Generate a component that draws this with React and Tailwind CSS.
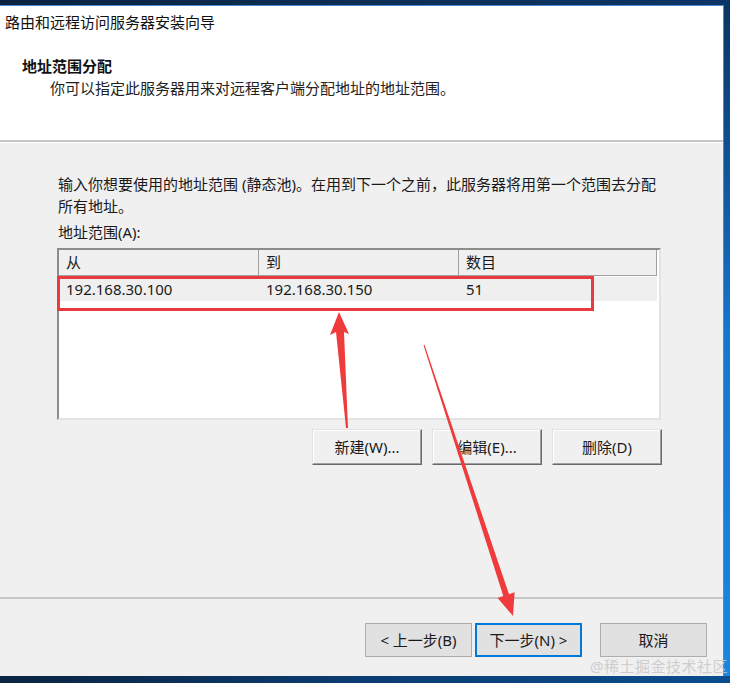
import React from "react";

const font = { fontFamily: '"Noto Sans", "Noto Sans CJK SC", sans-serif' };

const columns = [
  { key: "from", label: "从", width: "w-[200px]" },
  { key: "to", label: "到", width: "w-[200px]" },
  { key: "count", label: "数目", width: "w-[198px]" },
];

const rows = [{ from: "192.168.30.100", to: "192.168.30.150", count: "51" }];

// classic 3D push button (list actions)
const ClassicButton = ({ children }) => (
  <button className="w-[110px] h-[36px] bg-[#f0f0f0] text-[15px] text-[#1a1a1a] border border-t-[#e3e3e3] border-l-[#e3e3e3] border-r-[#696969] border-b-[#696969] shadow-[inset_-1px_-1px_0_#a0a0a0,inset_1px_1px_0_#ffffff]">
    {children}
  </button>
);

// win10 flat wizard button
const WizardButton = ({ children, primary }) => (
  <button
    className={`w-[107px] h-[34px] bg-[#e1e1e1] text-[15px] text-[#1a1a1a] ${
      primary ? "border-2 border-[#0078d7]" : "border border-[#adadad]"
    }`}
  >
    {children}
  </button>
);

const Annotations = () => (
  <svg className="absolute inset-0 pointer-events-none" width="730" height="683" viewBox="0 0 730 683">
    <rect x="58.5" y="277.5" width="534" height="32" fill="none" stroke="#ea3a3c" strokeWidth="3" />
    {/* arrow pointing up at the row */}
    <polygon points="339,312 349,334 344,332 348,428 346,428 336,332 330,335" fill="#ef3b3b" />
    {/* arrow pointing down to the next button */}
    <polygon points="423.5,345.2 424.5,344.8 509,594.2 514.6,592.3 513,616 497.6,597.9 503.3,596" fill="#ef3b3b" />
  </svg>
);

export default function App() {
  return (
    <div className="relative w-[730px] h-[683px] overflow-hidden flex flex-col bg-[#0b2a4d]" style={font}>
      {/* desktop strip above the window */}
      <div className="h-[5px] bg-gradient-to-r from-[#0a2240] via-[#0c2e55] to-[#0b3566]" />

      <div className="flex flex-1 min-h-0">
        {/* wizard window */}
        <div className="w-[724px] flex flex-col border-t border-r border-[#4a8ad0]">
          {/* header */}
          <div className="h-[136px] bg-white border-b-2 border-[#c6c6c6] flex flex-col text-[15px] leading-[18px] text-[#111]">
            <div className="pt-[7px] pl-[5px]">路由和远程访问服务器安装向导</div>
            <div className="mt-[26px] pl-[22px] font-bold">地址范围分配</div>
            <div className="mt-[4px] pl-[50px] text-[#222]">你可以指定此服务器用来对远程客户端分配地址的地址范围。</div>
          </div>

          {/* body */}
          <div className="flex-1 bg-[#f0f0f0] pl-[57px] pt-[30px] text-[15px] text-[#1a1a1a] border-t border-white">
            <p className="leading-[22px] pl-[1px]">
              输入你想要使用的地址范围 (静态池)。在用到下一个之前，此服务器将用第一个范围去分配
              <br />
              所有地址。
            </p>
            <div className="mt-[4px] leading-[22px] pl-[1px]">地址范围(A):</div>

            {/* list view */}
            <div className="mt-[5px] w-[604px] h-[172px] bg-white border-2 border-t-[#8c8c8c] border-l-[#8c8c8c] border-r-[#e3e3e3] border-b-[#e3e3e3] flex flex-col">
              <div className="flex h-[26px]">
                {columns.map((c) => (
                  <div
                    key={c.key}
                    className={`${c.width} bg-[#f0f0f0] border-r border-b border-[#a0a0a0] pl-[7px] leading-[25px]`}
                  >
                    {c.label}
                  </div>
                ))}
              </div>
              {rows.map((r, i) => (
                <div key={i} className="flex h-[24px] mt-[1px] bg-[#efefef] w-[598px] leading-[24px]">
                  {columns.map((c) => (
                    <div key={c.key} className={`${c.width} pl-[7px]`}>
                      {r[c.key]}
                    </div>
                  ))}
                </div>
              ))}
            </div>

            <div className="mt-[9px] w-[605px] flex justify-end gap-[10px]">
              <ClassicButton>新建(W)...</ClassicButton>
              <ClassicButton>编辑(E)...</ClassicButton>
              <ClassicButton>删除(D)</ClassicButton>
            </div>
          </div>

          {/* footer */}
          <div className="h-[79px] bg-[#f0f0f0] border-t-2 border-[#c6c6c6] flex justify-end items-start pt-[24px] pr-[16px]">
            <div className="flex gap-[3px]">
              <WizardButton>&lt; 上一步(B)</WizardButton>
              <WizardButton primary>下一步(N) &gt;</WizardButton>
            </div>
            <div className="ml-[18px]">
              <WizardButton>取消</WizardButton>
            </div>
          </div>
        </div>

        {/* desktop strip on the right */}
        <div className="flex-1 bg-gradient-to-b from-[#0a3564] via-[#1677d2] to-[#1a86e0]" />
      </div>

      {/* desktop strip below the window */}
      <div className="h-[7px] bg-gradient-to-r from-[#0a2442] via-[#0b3d73] to-[#0b4d8e]" />

      <Annotations />

      <div className="absolute right-[2px] bottom-[6px] text-[15px] text-[#c9c9c9]/90 tracking-[0.5px]">
        @稀土掘金技术社区
      </div>
    </div>
  );
}
